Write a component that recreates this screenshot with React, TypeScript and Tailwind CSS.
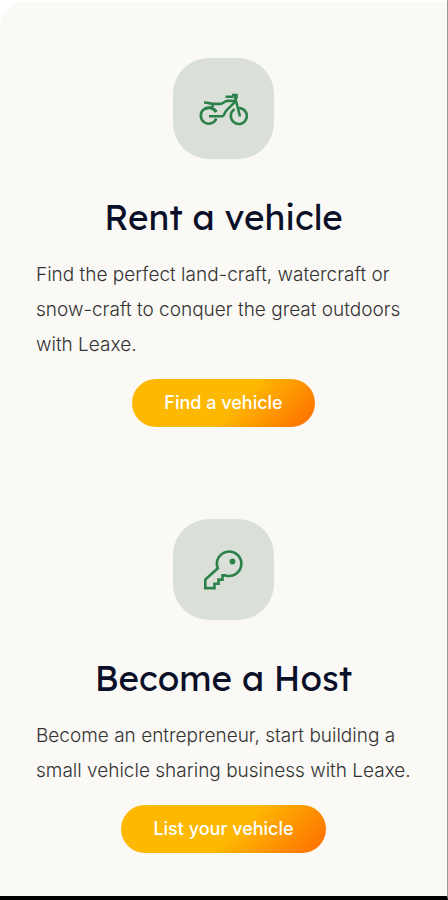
import type { ReactNode } from "react";

interface FeatureProps {
  icon: ReactNode;
  title: string;
  text: string;
  action: string;
}

function BikeIcon() {
  return (
    <svg
      aria-hidden="true"
      width="50"
      height="34"
      viewBox="0 0 50 34"
      fill="none"
      stroke="#2c814a"
      strokeWidth="2.6"
    >
      <path d="M17 20.200A8 8 0 1 0 17.300 26.500" />
      <path d="M35.600 17.200A8 8 0 1 0 39.500 16" />
      <path d="M5 10.600c3-.4 5 .900 9 1.300h7.500c2.500 0 4-3 7-3h8" />
      <path d="M6 17c4.500-2.200 9-1.500 11.500 2.500M14 12l-1 4" />
      <path d="M10 24.300h13.500c2.500-1 1.500-3.500 4-6l8.500-8.500" />
      <path d="M26.500 4.800h8M33 3h4.500v2.500h-2.500M36 5l5 19.500" />
    </svg>
  );
}

function KeyIcon() {
  return (
    <svg
      aria-hidden="true"
      width="42"
      height="42"
      viewBox="0 0 42 42"
      fill="none"
      stroke="#2c814a"
      strokeWidth="2.6"
    >
      <path d="M14.800 19.300A12.200 12.200 0 1 1 22.500 26.400h-3v4.200h-4v4.200h-4v4.300H2.300v-8.600z" />
      <circle cx="29.500" cy="12.500" r="2.900" fill="#2c814a" stroke="none" />
    </svg>
  );
}

function Feature({ icon, title, text, action }: FeatureProps) {
  return (
    <section className="flex flex-col items-center">
      <div className="flex size-[101px] items-center justify-center rounded-[36px] bg-[#dae0d8]">
        {icon}
      </div>
      <h2 className="mt-8 text-center font-['Lexend','Noto_Sans',sans-serif] text-[35px] leading-[52px] text-[#0b1029]">
        {title}
      </h2>
      <p className="mt-3.5 self-stretch text-[19px] leading-[35px] font-light text-[#333333]">
        {text}
      </p>
      <button
        type="button"
        className="mt-[17px] h-12 rounded-full bg-[linear-gradient(135deg,#fdb902_0%,#fdb902_55%,#ff6b00_100%)] px-8 text-lg font-medium text-white"
      >
        {action}
      </button>
    </section>
  );
}

export default function App() {
  return (
    <div className="border-r border-b-4 border-r-[#9a9a9a] border-b-black bg-white pt-0.5 font-['Inter',sans-serif]">
      <main className="flex flex-col gap-[92px] rounded-tl-3xl bg-[#faf9f5] px-9 pt-14 pb-[43px]">
        <Feature
          icon={<BikeIcon />}
          title="Rent a vehicle"
          text="Find the perfect land-craft, watercraft or snow-craft to conquer the great outdoors with Leaxe."
          action="Find a vehicle"
        />
        <Feature
          icon={<KeyIcon />}
          title="Become a Host"
          text="Become an entrepreneur, start building a small vehicle sharing business with Leaxe."
          action="List your vehicle"
        />
      </main>
    </div>
  );
}
